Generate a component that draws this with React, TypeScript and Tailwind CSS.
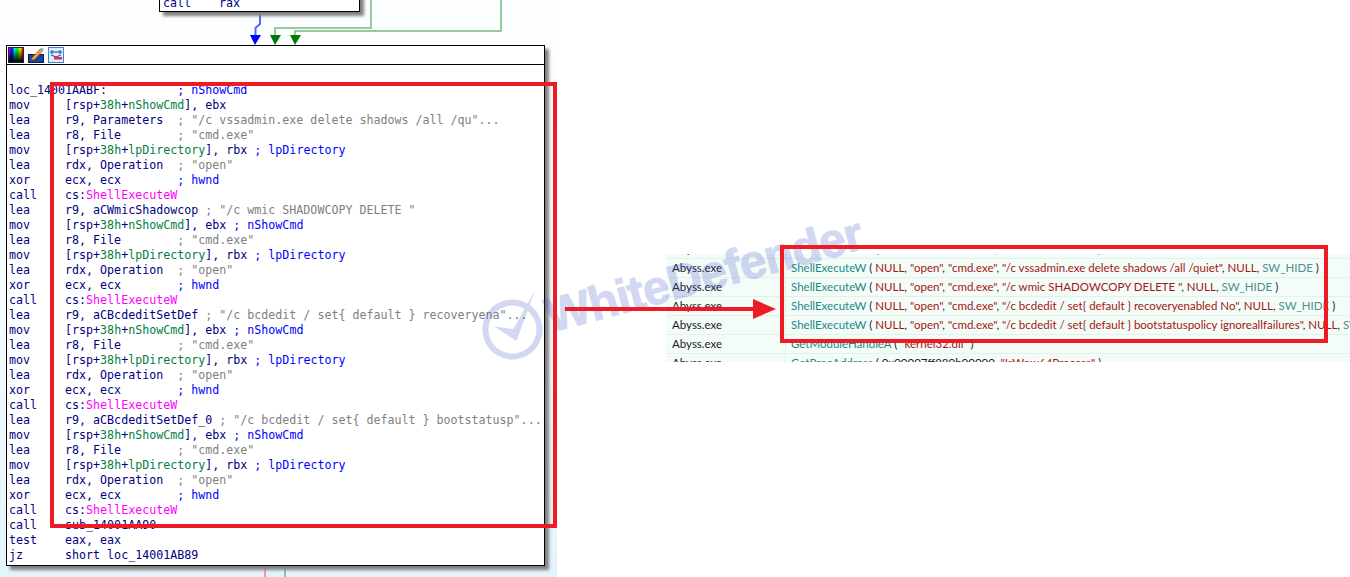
import React from "react";

type Seg = [string, string];

const OP = "text-[#000080]";
const NUM = "text-[#008040]";
const VAR = "text-[#008040]";
const STR = "text-[#808080]";
const CMT = "text-[#0000ff]";
const API = "text-[#ff00ff]";

const mov = (name: string, reg: string, note?: string): Seg[] => [
  ["mov     [rsp+", OP],
  ["38h", NUM],
  ["+", OP],
  [name, VAR],
  [`], ${reg}`, OP],
  ...(note ? ([[" ; ", CMT], [note, CMT]] as Seg[]) : []),
];
const str = (left: string, text: string): Seg[] => [
  [left, OP],
  [" ; ", STR],
  [text, STR],
];
const cmt = (left: string, text: string): Seg[] => [
  [left, OP],
  ["; ", CMT],
  [text, CMT],
];
const shell: Seg[] = [["call    cs:", OP], ["ShellExecuteW", API]];

const block = (): Seg[][] => [
  mov("nShowCmd", "ebx", "nShowCmd"),
  str("lea     r8, File       ", '"cmd.exe"'),
  mov("lpDirectory", "rbx", "lpDirectory"),
  str("lea     rdx, Operation ", '"open"'),
  cmt("xor     ecx, ecx        ", "hwnd"),
  shell,
];

const lines: Seg[][] = [
  cmt("loc_14001AABF:          ", "nShowCmd"),
  mov("nShowCmd", "ebx"),
  str("lea     r9, Parameters ", '"/c vssadmin.exe delete shadows /all /qu"...'),
  str("lea     r8, File       ", '"cmd.exe"'),
  mov("lpDirectory", "rbx", "lpDirectory"),
  str("lea     rdx, Operation ", '"open"'),
  cmt("xor     ecx, ecx        ", "hwnd"),
  shell,
  str("lea     r9, aCWmicShadowcop", '"/c wmic SHADOWCOPY DELETE "'),
  ...block(),
  str("lea     r9, aCBcdeditSetDef", '"/c bcdedit / set{ default } recoveryena"...'),
  ...block(),
  str("lea     r9, aCBcdeditSetDef_0", '"/c bcdedit / set{ default } bootstatusp"...'),
  ...block(),
  [["call    sub_14001AA90", OP]],
  [["test    eax, eax", OP]],
  [["jz      short loc_14001AB89", OP]],
];

type Row = { fn: string; args: React.ReactNode };

const Red = ({ children }: { children: React.ReactNode }) => (
  <span className="text-[#a31515]">{children}</span>
);
const Hide = () => <span className="text-[#4d8f8f]">SW_HIDE</span>;

const callArgs = (cmd: string, tail: React.ReactNode) => (
  <>
    {"( "}
    <Red>NULL</Red>, <Red>"open"</Red>, <Red>"cmd.exe"</Red>, <Red>{`"${cmd}"`}</Red>, <Red>NULL</Red>
    {tail}
  </>
);

const rows: Row[] = [
  { fn: "GetProcAddress", args: <>{"( 0x00007ff880b00000, "}<Red>"IsWow64Process"</Red>{" )"}</> },
  { fn: "ShellExecuteW", args: callArgs("/c vssadmin.exe delete shadows /all /quiet", <>, <Hide /> )</>) },
  { fn: "ShellExecuteW", args: callArgs("/c wmic SHADOWCOPY DELETE ", <>, <Hide /> )</>) },
  { fn: "ShellExecuteW", args: callArgs("/c bcdedit / set{ default } recoveryenabled No", <>, <Hide /> )</>) },
  { fn: "ShellExecuteW", args: callArgs("/c bcdedit / set{ default } bootstatuspolicy ignoreallfailures", <>, <Hide /> )</>) },
  { fn: "GetModuleHandleA", args: <>{"( "}<Red>"kernel32.dll"</Red>{" )"}</> },
  { fn: "GetProcAddress", args: <>{"( 0x00007ff880b00000, "}<Red>"IsWow64Process"</Red>{" )"}</> },
];

function Arrowhead({ x, color }: { x: number; color: string }) {
  return (
    <polygon points={`${x - 5},35 ${x + 6},35 ${x},45`} fill={color} />
  );
}

function Edges() {
  return (
    <svg className="absolute left-0 top-0" width="557" height="577">
      <path d="M260 12V24L255.5 28V36" fill="none" stroke="#4a6cf7" strokeWidth="2" />
      <path d="M275 36V28H371V0" fill="none" stroke="#74b97a" strokeWidth="1.5" />
      <path d="M295 36V31H501V0" fill="none" stroke="#74b97a" strokeWidth="1.5" />
      <Arrowhead x={255} color="#0000ff" />
      <Arrowhead x={275} color="#007a00" />
      <Arrowhead x={295} color="#007a00" />
      <path d="M265 566V577" stroke="#ee8080" strokeWidth="1.5" />
      <path d="M285 566V577" stroke="#74b97a" strokeWidth="1.5" />
    </svg>
  );
}

function ToolbarIcons() {
  return (
    <div className="flex h-[18px] items-center gap-1 pl-[1px]">
      <div className="h-4 w-4 border border-[#20204a] bg-[linear-gradient(180deg,#0000_0%,#000_100%),linear-gradient(90deg,#f0f,#00f,#0ff,#0f0,#ff0,#f00)]" />
      <svg width="16" height="16" viewBox="0 0 16 16">
        <rect x="0.5" y="7.5" width="15" height="8" fill="#1c3fa0" stroke="#0a1d60" />
        <path d="M4 11L12 2L14.5 4L6.5 12.5L3.5 13Z" fill="#f0a030" stroke="#a06010" strokeWidth="0.6" />
        <path d="M12 2L13.5 0.5L16 2.5L14.5 4Z" fill="#7fb2e5" />
      </svg>
      <svg width="16" height="16" viewBox="0 0 16 16">
        <rect x="0.5" y="0.5" width="15" height="15" fill="#dcebfa" stroke="#3f86d0" />
        <path d="M2 5H14M4 3V7M12 3V7" stroke="#1c3fa0" strokeWidth="1" />
        <path d="M3 8L8 10L13 8" fill="none" stroke="#1c3fa0" strokeWidth="1" />
        <rect x="6" y="10" width="8" height="2.5" fill="#e03040" />
      </svg>
    </div>
  );
}

function Watermark() {
  return (
    <div className="pointer-events-none absolute left-[474px] top-[251px] flex rotate-[-15deg] items-center gap-[2px] text-[#3c50c8] opacity-[0.22]">
      <svg width="66" height="66" viewBox="0 0 66 66" fill="none" stroke="currentColor">
        <circle cx="32" cy="36" r="27" strokeWidth="6" />
        <path d="M15 28L33 48L64 4L33 36Z" fill="currentColor" stroke="none" />
      </svg>
      <span className="font-['Liberation_Sans',sans-serif] text-[48px] font-bold leading-none tracking-[-1px] [-webkit-text-stroke:1px_#3c50c8]">WhiteDefender</span>
    </div>
  );
}

export default function App() {
  return (
    <div className="relative h-[577px] w-[1350px] overflow-hidden bg-white">
      {/* graph view */}
      <div className="absolute left-0 top-0 h-[577px] w-[557px] bg-[linear-gradient(180deg,#fdfeff_0%,#f8fcfe_45%,#e4f4fc_100%)]">
        <Edges />
        <div className="absolute left-[159px] top-[-8px] h-5 w-[201px] border border-black bg-white pl-[3px] pt-[3px] font-['DejaVu_Sans_Mono',monospace] text-[11.65px] leading-[15px] text-[#000080] shadow-[4px_4px_3px_#808080] whitespace-pre">
          call    rax
        </div>
        <div className="absolute left-[6px] top-[45px] h-[521px] w-[539px] border border-black bg-white shadow-[4px_4px_3px_#808080]">
          <ToolbarIcons />
          <div className="border-t border-black pl-[2px] pt-[18px] font-['DejaVu_Sans_Mono',monospace] text-[11.65px] leading-[15px]">
            {lines.map((line, i) => (
              <div key={i} className="h-[15px] whitespace-pre">
                {line.map(([t, c], j) => (
                  <span key={j} className={c}>{t}</span>
                ))}
              </div>
            ))}
          </div>
        </div>
      </div>

      {/* api monitor table */}
      <div className="absolute left-[666px] top-[254px] h-[108px] w-[684px] overflow-hidden bg-[#f4fcf8] font-['Lato',sans-serif] text-[11.5px] text-[#1a1a2e]">
        <div className="mt-[-14px]">
          {rows.map((r, i) => (
            <div key={i} className="flex h-[19px] items-center border-b border-[#e4f0ea] whitespace-pre">
              <div className="h-full w-[120px] shrink-0 border-r border-[#e4f0ea] pl-[6px] leading-[18px]">Abyss.exe</div>
              <div className="pl-[5px]">
                <span className="text-[#1a8a8a]">{r.fn}</span> {r.args}
              </div>
            </div>
          ))}
        </div>
      </div>

      <Watermark />

      {/* annotations */}
      <div className="absolute left-[50px] top-[82px] h-[446px] w-[507px] border-4 border-[#ed1c24]" />
      <div className="absolute left-[780px] top-[245px] h-[98px] w-[548px] border-4 border-[#ed1c24]" />
      <div className="absolute left-[565px] top-[299px] flex items-center">
        <div className="h-1 w-[188px] bg-[#ed1c24]" />
        <div className="h-0 w-0 border-y-[10px] border-l-[23px] border-y-transparent border-l-[#ed1c24]" />
      </div>
    </div>
  );
}
